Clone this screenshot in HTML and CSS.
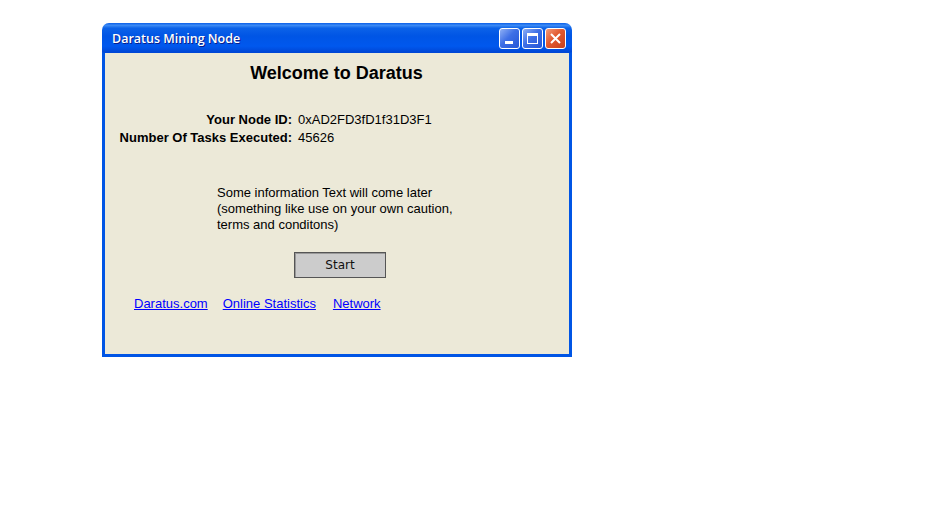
FILE: index.html
```html
<!DOCTYPE html>
<html>
<head>
<meta charset="utf-8">
<link rel="stylesheet" href="styles.css">
</head>
<body>
<div class="desk">
  <div class="window">
    <div class="titlebar">
      <span class="title">Daratus Mining Node</span>
      <div class="controls">
        <span class="cbtn min"><svg width="19" height="19" viewBox="0 0 19 19"><rect x="5" y="12" width="8" height="3" fill="#fff"/></svg></span>
        <span class="cbtn max"><svg width="19" height="19" viewBox="0 0 19 19"><rect x="4.5" y="4.5" width="10" height="10" fill="none" stroke="#fff" stroke-width="1"/><rect x="4" y="4" width="11" height="3" fill="#fff"/></svg></span>
        <span class="cbtn close"><svg width="19" height="19" viewBox="0 0 19 19"><path d="M5 5 L14 14 M14 5 L5 14" stroke="#fff" stroke-width="2"/></svg></span>
      </div>
    </div>
    <div class="body">
      <h1 class="heading">Welcome to Daratus</h1>
      <div class="info">
        <span class="label">Your Node ID:</span><span class="value">0xAD2FD3fD1f31D3F1</span>
        <span class="label">Number Of Tasks Executed:</span><span class="value">45626</span>
      </div>
      <p class="note">Some information Text will come later<br>(something like use on your own caution,<br>terms and conditons)</p>
      <button class="start">Start</button>
      <div class="links">
        <a href="#">Daratus.com</a>
        <a href="#">Online Statistics</a>
        <a href="#" class="last">Network</a>
      </div>
    </div>
  </div>
</div>
</body>
</html>
```

FILE: styles.css
```css
html, body { margin: 0; padding: 0; background: #fff; }
.desk { padding: 23px 0 0 102px; }
.window { width: 470px; }
.titlebar {
  height: 29px;
  box-sizing: border-box;
  border-radius: 7px 7px 0 0;
  background: linear-gradient(to bottom, #0a5ee8 0%, #3d8bf5 8%, #0c62e8 18%, #0055e5 45%, #0058ee 80%, #0047d6 100%);
  display: flex;
  align-items: center;
  justify-content: space-between;
  padding: 0 6px 0 10px;
}
.title {
  color: #fff;
  font-family: "Open Sans", sans-serif;
  font-weight: 600;
  font-size: 12.5px;
  text-shadow: 1px 1px 0 #0a1e8a;
  padding-top: 1px;
}
.controls { display: flex; gap: 2px; padding-top: 2px; }
.cbtn {
  width: 21px; height: 21px;
  box-sizing: border-box;
  border: 1px solid #fff;
  border-radius: 3px;
  display: flex; align-items: center; justify-content: center;
  background: linear-gradient(135deg, #8fb0f5 0%, #3e6fe6 45%, #2556d6 100%);
}
.cbtn.close { background: linear-gradient(135deg, #f29a7a 0%, #e2592f 45%, #c8401c 100%); }
.body {
  background: #ece9d8;
  border: 3px solid #0055e5;
  border-top: 1px solid #0047d6;
  height: 305px;
  box-sizing: border-box;
  font-family: "Liberation Sans", Arial, sans-serif;
  font-size: 13px;
  color: #000;
  padding-top: 10px;
}
.heading {
  margin: 0;
  font-size: 18px;
  line-height: 20px;
  font-weight: bold;
  text-align: center;
  padding-right: 1px;
}
.info {
  display: grid;
  grid-template-columns: 173px auto;
  column-gap: 6px;
  margin: 28px 0 0 14px;
  line-height: 18px;
}
.label { font-weight: bold; text-align: right; }
.note {
  margin: 38px 0 0 112px;
  line-height: 16px;
}
.start {
  display: block;
  margin: 19px 0 0 189px;
  width: 92px;
  height: 26px;
  background: #cccccc;
  border: 1px solid #555;
  box-shadow: inset 1px 1px 0 #999;
  font-family: "DejaVu Sans", sans-serif;
  font-size: 12px;
  color: #111;
  padding: 0;
}
.links {
  display: flex;
  gap: 15px;
  margin: 18px 0 0 29px;
  line-height: 16px;
}
.links a { color: #0000ff; text-decoration: underline; }
.links a.last { margin-left: 2px; }
```
